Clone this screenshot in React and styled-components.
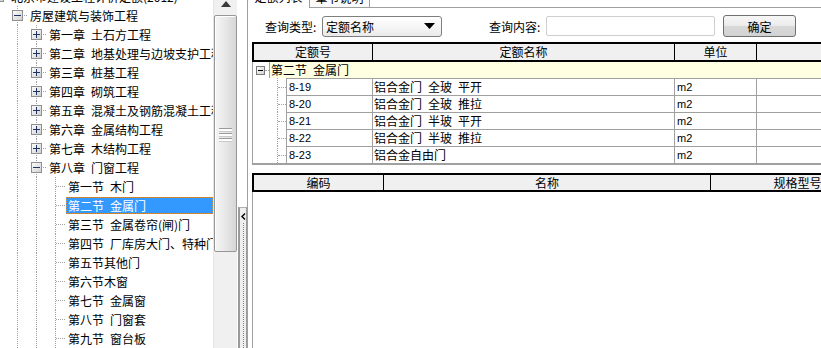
import React from 'react';
import styled, { createGlobalStyle, css } from 'styled-components';

const GlobalStyle = createGlobalStyle`
  html, body {
    margin: 0;
    padding: 0;
    background: #fff;
  }
  body {
    overflow: hidden;
    font-family: 'Noto Sans CJK SC', 'Liberation Sans', sans-serif;
    font-size: 12px;
    color: #000;
  }
`;

const Screen = styled.div`
  display: flex;
  width: 821px;
  height: 348px;
  overflow: hidden;
  background: #fff;
`;

/* ---------- left tree ---------- */

const LeftPanel = styled.div`
  display: flex;
  width: 237px;
  flex-shrink: 0;
  height: 100%;
`;

const Tree = styled.div`
  width: 213px;
  flex-shrink: 0;
  overflow: hidden;
`;

const TreeList = styled.div`
  margin-top: -13px;
  margin-left: -11px;
`;

const TreeRow = styled.div`
  display: flex;
  height: 19px;
  white-space: pre;
`;

const Indent = styled.span`
  position: relative;
  width: 19px;
  flex-shrink: 0;
  display: flex;
  align-items: center;
  justify-content: center;

  ${(p) =>
    p.$vline &&
    css`
      &::before {
        content: '';
        position: absolute;
        left: 9px;
        top: 0;
        bottom: 0;
        border-left: 1px dotted #a0a0a0;
      }
    `}
  ${(p) =>
    p.$branch &&
    css`
      &::after {
        content: '';
        position: absolute;
        left: 10px;
        right: 0;
        top: 9px;
        border-top: 1px dotted #a0a0a0;
      }
    `}

  svg {
    position: relative;
    z-index: 1;
  }
`;

const TreeLabel = styled.span`
  flex: 1;
  margin: 1px 0 1px 1px;
  padding: 0 1px;
  border: 1px solid transparent;
  line-height: 15px;
  ${(p) =>
    p.$selected &&
    css`
      background: #3399ff;
      border: 1px dotted #d9903a;
      color: #fff;
    `}
`;

const ScrollBar = styled.div`
  width: 24px;
  flex-shrink: 0;
  display: flex;
  flex-direction: column;
  background: #f0f0f0;
  border-left: 1px solid #e6e6e6;
  box-sizing: border-box;
`;

const ScrollArrow = styled.div`
  height: 15px;
  display: flex;
  justify-content: center;
  padding-top: 1px;
  box-sizing: border-box;
`;

const ScrollThumb = styled.div`
  height: 237px;
  border: 1px solid #979797;
  border-radius: 2px;
  box-sizing: border-box;
  background: linear-gradient(to right, #f6f6f6 0%, #e9e9e9 45%, #d6d6d6 100%);
  box-shadow: inset 1px 1px 0 #fff;
  display: flex;
  align-items: center;
  justify-content: center;
`;

const Grip = styled.div`
  width: 13px;
  height: 15px;
  margin-top: 4px;
  background: repeating-linear-gradient(
    to bottom,
    #9b9b9b 0,
    #9b9b9b 1px,
    #fdfdfd 1px,
    #fdfdfd 3px,
    #c9c9c9 3px,
    #c9c9c9 4px,
    transparent 4px,
    transparent 5px
  );
`;

/* ---------- splitter ---------- */

const Splitter = styled.div`
  width: 10px;
  flex-shrink: 0;
  padding-left: 1px;
  box-sizing: border-box;
  display: flex;
  flex-direction: column;
`;

const SplitHandle = styled.div`
  margin-top: 207px;
  flex: 1;
  border-left: 2px solid #9a9a9a;
  border-right: 1px solid #9a9a9a;
  border-top: 1px solid #b0b0b0;
  background: #efefef;
  display: flex;
  flex-direction: column;
  align-items: center;
  padding-top: 5px;
`;

const SplitDots = styled.div`
  flex: 1;
  margin-top: 3px;
  border-left: 1px dotted #3d8fe8;
`;

/* ---------- right panel ---------- */

const RightPanel = styled.div`
  flex: 1;
  min-width: 0;
  display: flex;
  flex-direction: column;
  border-left: 1px solid #a0a0a0;
  overflow: hidden;
`;

const TabStrip = styled.div`
  display: flex;
  height: 19px;
  margin-top: -11px;
  flex-shrink: 0;
`;

const Tab = styled.div`
  width: ${(p) => p.$width}px;
  line-height: 16px;
  text-align: center;
  box-sizing: border-box;
  ${(p) =>
    p.$active
      ? css`
          background: #fff;
        `
      : css`
          border: 1px solid #a0a0a0;
          background: #fbfbfb;
        `}
`;

const TabFill = styled.div`
  flex: 1;
  border-bottom: 1px solid #a0a0a0;
`;

const QueryBar = styled.div`
  display: flex;
  align-items: center;
  height: 22px;
  margin-top: 7px;
  padding-left: 17px;
  flex-shrink: 0;
`;

const QueryLabel = styled.span`
  width: 57px;
  margin-left: ${(p) => p.$gap || 0}px;
  flex-shrink: 0;
  white-space: nowrap;
`;

const Select = styled.div`
  width: 120px;
  height: 21px;
  box-sizing: border-box;
  border: 1px solid #7f7f7f;
  border-radius: 3px;
  background: linear-gradient(#ffffff, #f4f4f4 60%, #e9e9e9);
  display: flex;
  align-items: center;
  justify-content: space-between;
  padding: 0 6px 0 3px;
`;

const Input = styled.div`
  width: 169px;
  height: 20px;
  box-sizing: border-box;
  border: 1px solid #cfcfcf;
  border-radius: 2px;
  background: #fff;
`;

const Button = styled.div`
  width: 73px;
  height: 22px;
  margin-left: 8px;
  box-sizing: border-box;
  border: 1px solid #707070;
  border-radius: 3px;
  background: linear-gradient(#f7f7f7, #ebebeb 50%, #d9d9d9 51%, #d2d2d2);
  display: flex;
  align-items: center;
  justify-content: center;
`;

/* ---------- grids ---------- */

const GridBox = styled.div`
  margin-left: 4px;
  width: 700px;
  border-left: 1px solid #a0a0a0;
  flex-shrink: 0;
  ${(p) =>
    p.$fill
      ? css`
          flex: 1;
          margin-top: 8px;
        `
      : css`
          margin-top: 5px;
          border-bottom: 2px solid #a0a0a0;
        `}
`;

const HeaderRow = styled.div`
  display: flex;
  height: ${(p) => p.$height}px;
  margin-left: -1px;
  box-sizing: border-box;
  border-top: 2px solid #000;
  border-bottom: 2px solid #000;
  background: #f0f0f0;
`;

const HeaderCell = styled.div`
  width: ${(p) => (p.$width ? `${p.$width}px` : 'auto')};
  flex: ${(p) => (p.$width ? 'none' : 1)};
  box-sizing: border-box;
  border-left: ${(p) => (p.$first ? 2 : 1)}px solid #000;
  text-align: center;
  line-height: 15px;
  white-space: nowrap;
`;

const GroupRow = styled.div`
  display: flex;
  height: 16px;
`;

const GroupGutter = styled.span`
  position: relative;
  width: 16px;
  flex-shrink: 0;
  display: flex;
  align-items: center;
  padding-left: 3px;
  box-sizing: border-box;

  &::after {
    content: '';
    position: absolute;
    left: 12px;
    right: 0;
    top: 8px;
    border-top: 1px dotted #a0a0a0;
  }
`;

const GroupCell = styled.div`
  flex: 1;
  background: #ffffe1;
  border-left: 1px solid #a0a0a0;
  padding-left: 1px;
  line-height: 16px;
  white-space: pre;
`;

const DataRow = styled.div`
  display: flex;
  height: 17px;
`;

const RowGutter = styled.span`
  position: relative;
  width: 33px;
  flex-shrink: 0;

  &::before {
    content: '';
    position: absolute;
    left: 24px;
    top: 0;
    bottom: 0;
    border-left: 1px dotted #a0a0a0;
  }
  &::after {
    content: '';
    position: absolute;
    left: 25px;
    right: 0;
    top: 9px;
    border-top: 1px dotted #a0a0a0;
  }
`;

const Cell = styled.div`
  width: ${(p) => (p.$width ? `${p.$width}px` : 'auto')};
  flex: ${(p) => (p.$width ? 'none' : 1)};
  box-sizing: border-box;
  border-top: 1px solid #a0a0a0;
  border-left: 1px solid #a0a0a0;
  padding-left: ${(p) => p.$pad ?? 2}px;
  line-height: 16px;
  white-space: pre;
  ${(p) =>
    p.$latin &&
    css`
      font-family: 'Liberation Sans', sans-serif;
      font-size: 11px;
    `}
`;

/* ---------- icons ---------- */

const ExpandBox = ({ open, size = 11, border = '#8f8f8f', sign = '#1e3264' }) => {
  const c = size / 2;
  const id = `eb${size}`;
  return (
    <svg width={size} height={size} viewBox={`0 0 ${size} ${size}`}>
      <defs>
        <linearGradient id={id} x1="0" y1="0" x2="1" y2="1">
          <stop offset="0" stopColor="#ffffff" />
          <stop offset="1" stopColor="#cfcfcf" />
        </linearGradient>
      </defs>
      <rect x="0.5" y="0.5" width={size - 1} height={size - 1} fill={`url(#${id})`} stroke={border} />
      <path d={`M2 ${c} H${size - 2}`} stroke={sign} strokeWidth="1" />
      {!open && <path d={`M${c} 2 V${size - 2}`} stroke={sign} strokeWidth="1" />}
    </svg>
  );
};

const UpTriangle = () => (
  <svg width="10" height="6" viewBox="0 0 10 6">
    <path d="M0 6 L5 0 L10 6 Z" fill="#3a3a3a" />
  </svg>
);

const DownTriangle = () => (
  <svg width="11" height="6" viewBox="0 0 11 6">
    <path d="M0 0 H11 L5.5 6 Z" fill="#000" />
  </svg>
);

const Chevron = () => (
  <svg width="5" height="7" viewBox="0 0 5 7">
    <path d="M4 0.5 L1 3.5 L4 6.5" fill="none" stroke="#000" strokeWidth="1.4" />
  </svg>
);

/* ---------- data ---------- */

const sp = '\u2002';

const treeRows = [
  { level: 0, label: '北京市建设工程计价定额(2012)', box: 'minus' },
  { level: 1, label: '房屋建筑与装饰工程', box: 'minus' },
  { level: 2, label: `第一章${sp}土石方工程`, box: 'plus' },
  { level: 2, label: `第二章${sp}地基处理与边坡支护工程`, box: 'plus' },
  { level: 2, label: `第三章${sp}桩基工程`, box: 'plus' },
  { level: 2, label: `第四章${sp}砌筑工程`, box: 'plus' },
  { level: 2, label: `第五章${sp}混凝土及钢筋混凝土工程`, box: 'plus' },
  { level: 2, label: `第六章${sp}金属结构工程`, box: 'plus' },
  { level: 2, label: `第七章${sp}木结构工程`, box: 'plus' },
  { level: 2, label: `第八章${sp}门窗工程`, box: 'minus' },
  { level: 3, label: `第一节${sp}木门` },
  { level: 3, label: `第二节${sp}金属门`, selected: true },
  { level: 3, label: `第三节${sp}金属卷帘(闸)门` },
  { level: 3, label: `第四节${sp}厂库房大门、特种门` },
  { level: 3, label: '第五节其他门' },
  { level: 3, label: '第六节木窗' },
  { level: 3, label: `第七节${sp}金属窗` },
  { level: 3, label: `第八节${sp}门窗套` },
  { level: 3, label: `第九节${sp}窗台板` },
];

const quotaRows = [
  { code: '8-19', name: `铝合金门${sp}全玻${sp}平开`, unit: 'm2' },
  { code: '8-20', name: `铝合金门${sp}全玻${sp}推拉`, unit: 'm2' },
  { code: '8-21', name: `铝合金门${sp}半玻${sp}平开`, unit: 'm2' },
  { code: '8-22', name: `铝合金门${sp}半玻${sp}推拉`, unit: 'm2' },
  { code: '8-23', name: '铝合金自由门', unit: 'm2' },
];

const TreeItem = ({ row }) => (
  <TreeRow>
    {Array.from({ length: row.level }, (_, i) => (
      <Indent key={i} $vline={i > 0} />
    ))}
    <Indent $vline={row.level > 0} $branch={row.level > 0}>
      {row.box && <ExpandBox open={row.box === 'minus'} />}
    </Indent>
    <TreeLabel $selected={row.selected}>{row.label}</TreeLabel>
  </TreeRow>
);

export default function App() {
  return (
    <>
      <GlobalStyle />
      <Screen>
        <LeftPanel>
          <Tree>
            <TreeList>
              {treeRows.map((row, i) => (
                <TreeItem key={i} row={row} />
              ))}
            </TreeList>
          </Tree>
          <ScrollBar>
            <ScrollArrow>
              <UpTriangle />
            </ScrollArrow>
            <ScrollThumb>
              <Grip />
            </ScrollThumb>
          </ScrollBar>
        </LeftPanel>

        <Splitter>
          <SplitHandle>
            <Chevron />
            <SplitDots />
          </SplitHandle>
        </Splitter>

        <RightPanel>
          <TabStrip>
            <Tab $active $width={61}>定额列表</Tab>
            <Tab $width={61}>章节说明</Tab>
            <TabFill />
          </TabStrip>

          <QueryBar>
            <QueryLabel>查询类型:</QueryLabel>
            <Select>
              <span>定额名称</span>
              <DownTriangle />
            </Select>
            <QueryLabel $gap={47}>查询内容:</QueryLabel>
            <Input />
            <Button>确定</Button>
          </QueryBar>

          <GridBox>
            <HeaderRow $height={20}>
              <HeaderCell $first $width={120}>定额号</HeaderCell>
              <HeaderCell $width={302}>定额名称</HeaderCell>
              <HeaderCell $width={82}>单位</HeaderCell>
              <HeaderCell />
            </HeaderRow>
            <GroupRow>
              <GroupGutter>
                <ExpandBox open size={9} border="#7a7a7a" sign="#000" />
              </GroupGutter>
              <GroupCell>{`第二节${sp}金属门`}</GroupCell>
            </GroupRow>
            {quotaRows.map((r) => (
              <DataRow key={r.code}>
                <RowGutter />
                <Cell $width={86} $pad={2} $latin>{r.code}</Cell>
                <Cell $width={302} $pad={1}>{r.name}</Cell>
                <Cell $width={82} $pad={2} $latin>{r.unit}</Cell>
                <Cell />
              </DataRow>
            ))}
          </GridBox>

          <GridBox $fill>
            <HeaderRow $height={19}>
              <HeaderCell $first $width={131}>编码</HeaderCell>
              <HeaderCell $width={327}>名称</HeaderCell>
              <HeaderCell $width={174}>规格型号</HeaderCell>
              <HeaderCell />
            </HeaderRow>
          </GridBox>
        </RightPanel>
      </Screen>
    </>
  );
}
